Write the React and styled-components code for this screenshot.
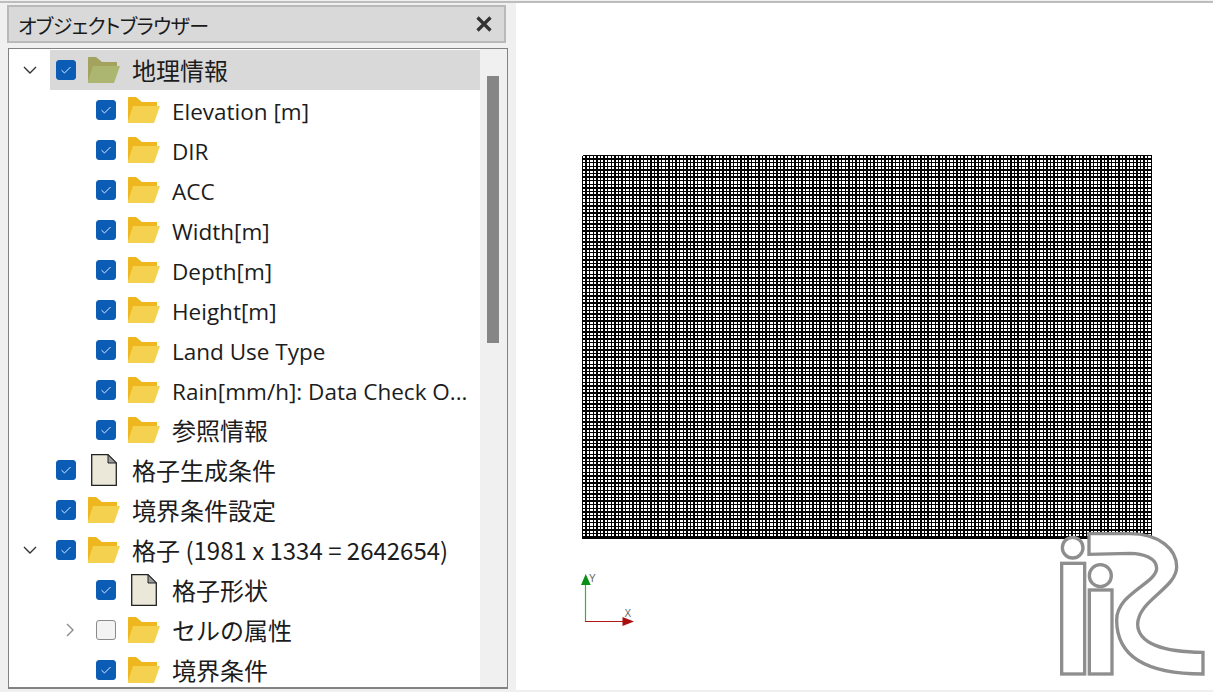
import React from "react";
import styled, { createGlobalStyle } from "styled-components";

const GlobalStyle = createGlobalStyle`
  html, body {
    margin: 0;
    padding: 0;
    width: 1213px;
    height: 692px;
    overflow: hidden;
    background: #f0f0f0;
  }
  body {
    font-family: "Open Sans", "Noto Sans CJK JP", sans-serif;
  }
`;

const Page = styled.div`
  width: 1213px;
  height: 692px;
  display: flex;
  flex-direction: column;
  background: #f0f0f0;
`;

const TopLine = styled.div`
  height: 2px;
  margin-top: 1px;
  flex: none;
  background: #bdbdbd;
`;

const Main = styled.div`
  display: flex;
  height: 687px;
  flex: none;
`;

const Dock = styled.aside`
  width: 516px;
  flex: none;
  padding: 2px 8px 0 7px;
  box-sizing: border-box;
`;

const TitleBar = styled.header`
  height: 38px;
  width: 499px;
  box-sizing: border-box;
  border: 2px solid #b9b9b9;
  background: #d9d9d9;
  display: flex;
  align-items: center;
  justify-content: space-between;
  padding: 0 12px 0 9px;
`;

const Title = styled.span`
  font-family: "Noto Sans CJK JP", sans-serif;
  font-size: 20px;
  font-feature-settings: "palt";
  letter-spacing: -0.6px;
  position: relative;
  top: 1px;
  color: #1a1a1a;
`;

const TreeBox = styled.div`
  margin: 5px 0 0 1px;
  height: 641px;
  box-sizing: border-box;
  border: 1px solid #828282;
  border-bottom-width: 2px;
  display: flex;
  background: #fff;
  overflow: hidden;
`;

const Tree = styled.ul`
  list-style: none;
  margin: 0;
  padding: 1px 0 0;
  width: 471px;
  flex: none;
`;

const Row = styled.li`
  height: 40px;
  display: flex;
  align-items: center;
  padding-left: ${(p) => p.$depth * 40}px;
`;

const Expander = styled.span`
  width: 41px;
  height: 40px;
  flex: none;
  display: flex;
  align-items: center;
  justify-content: center;
`;

const Item = styled.div`
  flex: 1;
  min-width: 0;
  height: 40px;
  display: flex;
  align-items: center;
  padding-left: 6px;
  background: ${(p) => (p.$selected ? "#d9d9d9" : "transparent")};
`;

const Check = styled.span`
  width: 20px;
  height: 20px;
  flex: none;
  box-sizing: border-box;
  border-radius: 3px;
  display: flex;
  align-items: center;
  justify-content: center;
  background: ${(p) => (p.$on ? "#0a5cb5" : "#f3f3f3")};
  border: 1px solid ${(p) => (p.$on ? "#0a5cb5" : "#8a8a8a")};
`;

const IconSlot = styled.span`
  width: 32px;
  height: 40px;
  margin-left: 12px;
  flex: none;
  display: flex;
  align-items: center;
  justify-content: center;
`;

const Label = styled.span`
  margin-left: 12px;
  padding-top: ${(p) => (p.$cjk ? "0" : "4px")};
  font-family: ${(p) =>
    p.$cjk ? '"Noto Sans CJK JP", sans-serif' : '"Open Sans", "Noto Sans CJK JP", sans-serif'};
  font-size: ${(p) => (p.$cjk ? "24px" : "22.5px")};
  line-height: 36px;
  white-space: nowrap;
  color: #1c1c1c;
`;

const Scrollbar = styled.div`
  flex: 1;
  background: #f0f0f0;
  padding: 27px 8px 0 7px;
`;

const Thumb = styled.div`
  height: 267px;
  background: #868686;
`;

const Viewport = styled.main`
  flex: 1;
  background: #fff;
  height: 687px;
`;

const CanvasSvg = styled.svg`
  display: block;
`;

const CloseIcon = () => (
  <svg width="16" height="16" viewBox="0 0 16 16" aria-hidden="true">
    <path d="M1.5 1.5L14.5 14.5M14.5 1.5L1.5 14.5" stroke="#333" strokeWidth="3.2" fill="none" />
  </svg>
);

const ChevronDown = () => (
  <svg width="14" height="8" viewBox="0 0 14 8" aria-hidden="true">
    <path d="M1 1L7 7L13 1" stroke="#333" strokeWidth="1.4" fill="none" />
  </svg>
);

const ChevronRight = () => (
  <svg width="8" height="14" viewBox="0 0 8 14" aria-hidden="true">
    <path d="M1 1L7 7L1 13" stroke="#8c8c8c" strokeWidth="1.4" fill="none" />
  </svg>
);

const CheckMark = () => (
  <svg width="12" height="10" viewBox="0 0 12 10" aria-hidden="true">
    <path d="M1.5 5.2L4.5 8L10.5 2" stroke="#dcebff" strokeWidth="1" fill="none" />
  </svg>
);

const FolderIcon = ({ dim }) => (
  <svg width="32" height="26" viewBox="0 0 32 26" aria-hidden="true">
    <path
      d="M0 1Q0 0 1 0H8L14 5H29V10H6L0 26Z"
      fill={dim ? "#a3a35d" : "#eeb71f"}
    />
    <path d="M5 9H32L26 26H0V24Z" fill={dim ? "#adb671" : "#f4d14f"} />
  </svg>
);

const FileIcon = () => (
  <svg width="26" height="32" viewBox="0 0 26 32" aria-hidden="true">
    <path
      d="M0.7 0.7H17L25.3 9V31.3H0.7Z"
      fill="#ebe8d9"
      stroke="#222"
      strokeWidth="1.3"
    />
    <path d="M17 0.7V9H25.3Z" fill="#999" stroke="#222" strokeWidth="1" />
  </svg>
);

const rows = [
  { depth: 0, label: "地理情報", open: true, selected: true, cjk: true },
  { depth: 1, label: "Elevation [m]" },
  { depth: 1, label: "DIR" },
  { depth: 1, label: "ACC" },
  { depth: 1, label: "Width[m]" },
  { depth: 1, label: "Depth[m]" },
  { depth: 1, label: "Height[m]" },
  { depth: 1, label: "Land Use Type" },
  { depth: 1, label: "Rain[mm/h]: Data Check O..." },
  { depth: 1, label: "参照情報", cjk: true },
  { depth: 0, label: "格子生成条件", file: true, cjk: true },
  { depth: 0, label: "境界条件設定", cjk: true },
  { depth: 0, label: "格子 (1981 x 1334 = 2642654)", open: true, cjk: true },
  { depth: 1, label: "格子形状", file: true, cjk: true },
  { depth: 1, label: "セルの属性", closed: true, off: true, cjk: true },
  { depth: 1, label: "境界条件", cjk: true },
];

// lines of the mesh, the spacing is not a whole pixel so that they beat like the reference
const meshPath = () => {
  const x0 = 582.5, x1 = 1152, y0 = 155.5, y1 = 539, step = 3.6;
  let d = "";
  for (let x = x0; x < x1; x += step) d += `M${x.toFixed(2)} ${y0}V${y1}`;
  for (let y = y0; y < y1; y += step) d += `M${x0} ${y.toFixed(2)}H${x1}`;
  return d + `M${x1 - 0.5} ${y0}V${y1}M${x0} ${y1 - 0.5}H${x1}`;
};

const Logo = () => (
  <g transform="translate(1040 520) scale(0.3333)" fill="#fff" stroke="#8e8e8e" strokeWidth="10">
    <circle cx="98" cy="83" r="31" />
    <rect x="65" y="130" width="69" height="332" />
    <circle cx="181" cy="167" r="33" />
    <rect x="148" y="210" width="68" height="252" />
    <path d="M147 41H270C360 41 410 90 410 140C410 205 295 240 293 312C293 370 370 397 489 397V462C400 462 230 450 230 300C230 220 350 190 350 145C350 115 310 100 270 100L147 103Z" />
  </g>
);

const Triad = () => (
  <g>
    <path d="M585.5 584V622" stroke="#35b535" strokeWidth="1.2" />
    <path d="M585.7 574L590.7 585H581Z" fill="#0a8f16" />
    <path d="M585 621.5H623" stroke="#b01818" strokeWidth="1.2" />
    <path d="M622.5 617L634 621.5L622.5 626Z" fill="#a80f0f" />
    <text x="589" y="582" fontSize="10" fontFamily="Liberation Sans, sans-serif" fill="#666">Y</text>
    <text x="624.5" y="617" fontSize="10" fontFamily="Liberation Sans, sans-serif" fill="#666">X</text>
  </g>
);

export default function App() {
  return (
    <Page>
      <GlobalStyle />
      <TopLine />
      <Main>
        <Dock>
          <TitleBar>
            <Title>オブジェクトブラウザー</Title>
            <CloseIcon />
          </TitleBar>
          <TreeBox>
            <Tree>
              {rows.map((r) => (
                <Row key={r.label} $depth={r.depth}>
                  <Expander>
                    {r.open && <ChevronDown />}
                    {r.closed && <ChevronRight />}
                  </Expander>
                  <Item $selected={r.selected}>
                    <Check $on={!r.off}>{!r.off && <CheckMark />}</Check>
                    <IconSlot>
                      {r.file ? <FileIcon /> : <FolderIcon dim={r.selected} />}
                    </IconSlot>
                    <Label $cjk={r.cjk}>{r.label}</Label>
                  </Item>
                </Row>
              ))}
            </Tree>
            <Scrollbar>
              <Thumb />
            </Scrollbar>
          </TreeBox>
        </Dock>
        <Viewport>
          <CanvasSvg width="697" height="687" viewBox="516 3 697 687">
            <path d={meshPath()} stroke="#000" strokeWidth="1.25" shapeRendering="crispEdges" fill="none" />
            <Triad />
            <Logo />
          </CanvasSvg>
        </Viewport>
      </Main>
    </Page>
  );
}
